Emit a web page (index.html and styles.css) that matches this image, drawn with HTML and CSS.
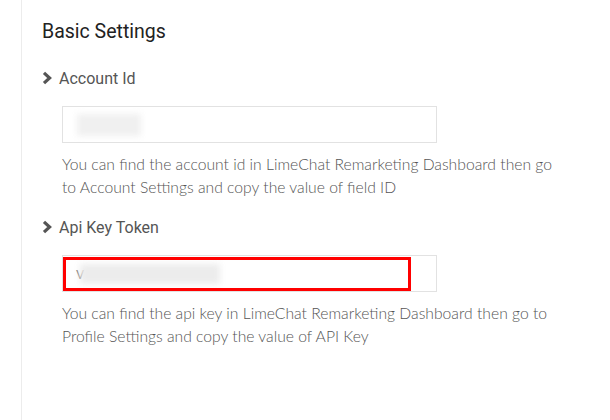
FILE: index.html
```html
<!DOCTYPE html>
<html>
<head>
<meta charset="utf-8">
<link rel="stylesheet" href="styles.css">
</head>
<body>
<div class="page">
  <div class="panel">
    <h2 class="title">Basic Settings</h2>

    <div class="field">
      <div class="label">
        <svg class="chev" viewBox="0 0 10 14" width="10" height="14"><path d="M2 1.8 L7.6 7 L2 12.2" fill="none" stroke="#555" stroke-width="3.2" stroke-linejoin="miter"/></svg>
        <span>Account Id</span>
      </div>
      <div class="input">
        <div class="blur blur-short"></div>
      </div>
      <p class="help">You can find the account id in LimeChat Remarketing Dashboard then go to Account Settings and copy the value of field ID</p>
    </div>

    <div class="field">
      <div class="label">
        <svg class="chev" viewBox="0 0 10 14" width="10" height="14"><path d="M2 1.8 L7.6 7 L2 12.2" fill="none" stroke="#555" stroke-width="3.2" stroke-linejoin="miter"/></svg>
        <span>Api Key Token</span>
      </div>
      <div class="input">
        <div class="highlight">
          <span class="vchar">V</span>
          <div class="blur blur-long"></div>
        </div>
      </div>
      <p class="help">You can find the api key in LimeChat Remarketing Dashboard then go to Profile Settings and copy the value of API Key</p>
    </div>
  </div>
</div>
</body>
</html>
```
FILE: styles.css
```css
html, body {
  margin: 0;
  padding: 0;
  background: #fff;
}
.page {
  width: 610px;
  height: 420px;
  overflow: hidden;
}
.panel {
  margin-left: 21px;
  border-left: 1px solid #ececec;
  height: 420px;
  padding: 20px 0 0 20px;
  box-sizing: border-box;
}
.title {
  margin: 0;
  font-family: Roboto, "Liberation Sans", sans-serif;
  font-weight: 400;
  font-size: 19.5px;
  line-height: 24px;
  color: #222;
}
.label {
  display: flex;
  align-items: center;
  gap: 7px;
  height: 24px;
  margin-top: 22px;
  font-family: Roboto, "Liberation Sans", sans-serif;
  font-size: 16px;
  font-weight: 400;
  color: #555;
}
.field + .field .label {
  margin-top: 16px;
}
.chev {
  display: block;
}
.input {
  margin: 16px 0 0 20px;
  width: 375px;
  height: 37px;
  border: 1px solid #e2e2e2;
  box-sizing: border-box;
  position: relative;
}
.blur {
  background: #f0f0f0;
  filter: blur(3px);
}
.blur-short {
  position: absolute;
  left: 14px;
  top: 7px;
  width: 64px;
  height: 22px;
}
.highlight {
  position: absolute;
  left: 0;
  top: 1px;
  width: 348px;
  height: 34px;
  border: 3px solid #f00;
  box-sizing: border-box;
  display: flex;
  align-items: center;
  padding-left: 10px;
  overflow: hidden;
}
.vchar {
  font-family: Roboto, "Liberation Sans", sans-serif;
  font-size: 13px;
  color: #777;
}
.blur-long {
  width: 140px;
  height: 20px;
  margin-left: -4px;
  background: #ececec;
}
.help {
  margin: 10px 0 0 20px;
  font-family: Lato, "Open Sans", sans-serif;
  font-weight: 300;
  font-size: 15.7px;
  line-height: 23px;
  color: #555;
  width: 500px;
}
```
